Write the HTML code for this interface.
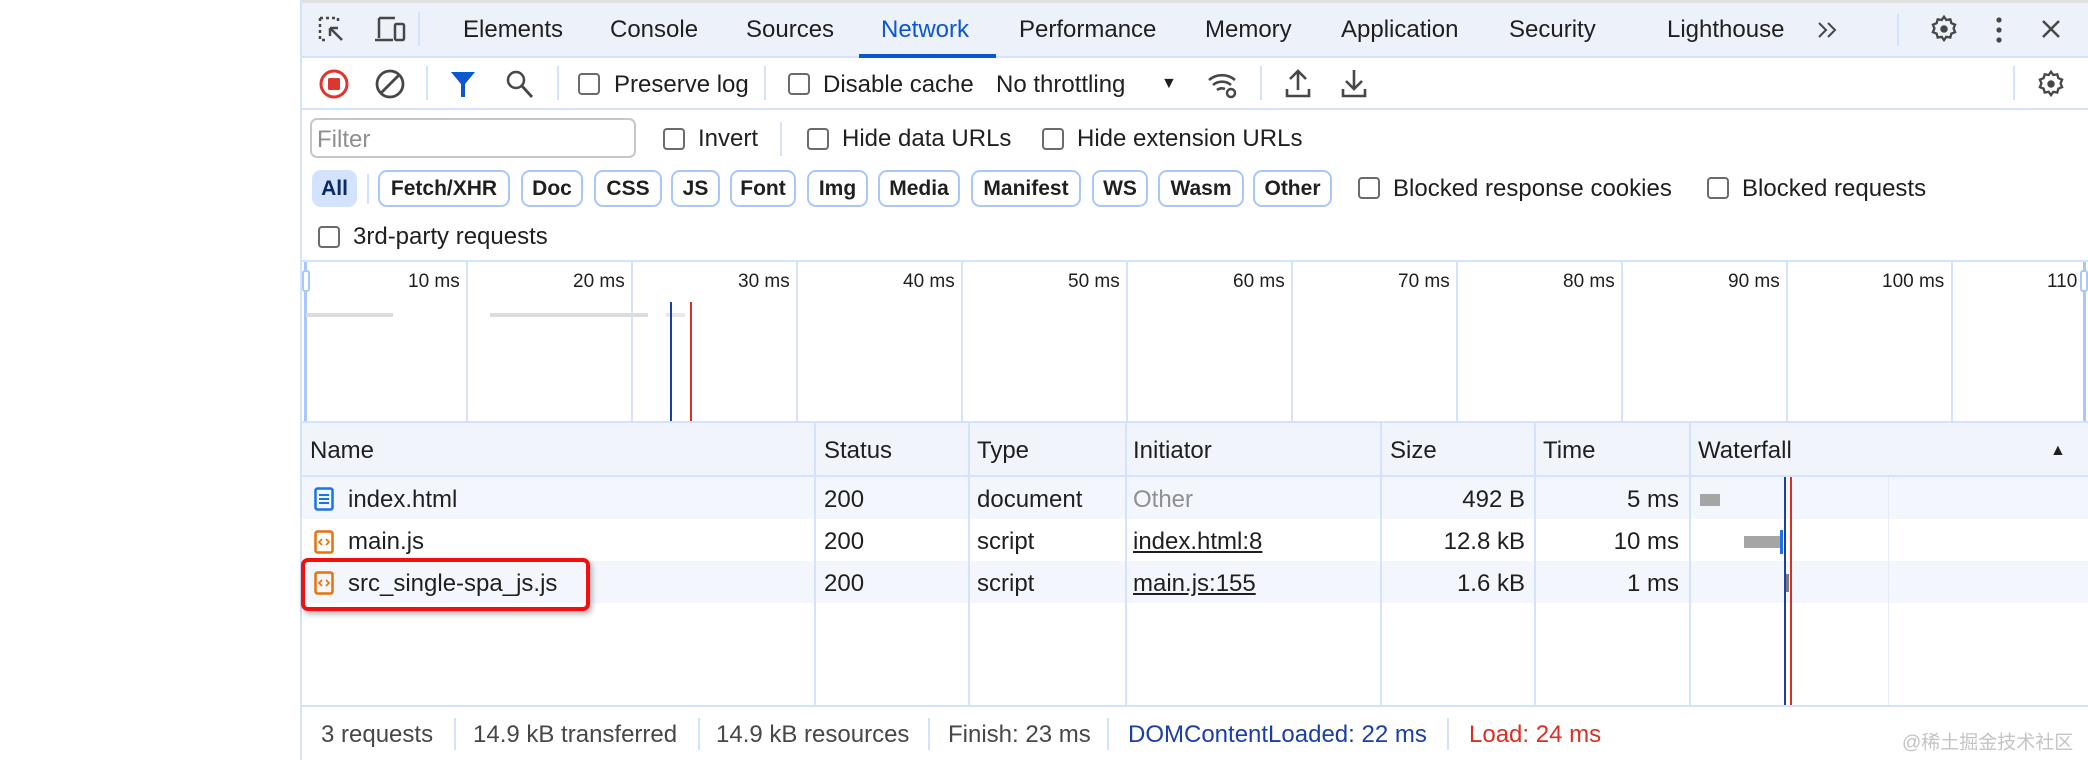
<!DOCTYPE html>
<html><head><meta charset="utf-8"><style>
*{margin:0;padding:0;box-sizing:border-box}
body{width:2088px;height:760px;background:#fff;position:relative;overflow:hidden;font-family:"Liberation Sans",sans-serif;font-size:24px;color:#1f1f1f}
.a{position:absolute;white-space:nowrap}
.t{transform:translateY(-50%)}
.cb{position:absolute;width:22px;height:22px;border:2px solid #6b6b6b;border-radius:4px;transform:translateY(-50%)}
.chip{position:absolute;top:170px;height:37px;border:2px solid #a8c7fa;border-radius:9px;font-weight:bold;font-size:21px;line-height:33px;text-align:center;color:#1f1f1f}
.sep{position:absolute;width:2px;background:#d3e3fd}
.vl{position:absolute;width:2px;background:#d3e3fd}
.tl{position:absolute;top:271px;font-size:19px;white-space:nowrap}
</style></head><body>
<div class="a" style="left:300px;top:0;width:1788px;height:760px;border-left:2px solid #d3e3fd"></div>
<!-- tab bar -->
<div class="a" style="left:302px;top:0;width:1786px;height:58px;background:#edf1f9;border-top:3px solid #e0e0e0;border-bottom:2px solid #d3e3fd"></div>
<svg class="a" style="left:318px;top:16px" width="30" height="28" viewBox="0 0 30 28"><path d="M2 2h18v6M2 2v22h6" fill="none" stroke="#474747" stroke-width="2.5" stroke-dasharray="3 3"/><path d="M12 12l12 12M12 12h8M12 12v8" fill="none" stroke="#474747" stroke-width="2.5"/></svg>
<svg class="a" style="left:373px;top:16px" width="34" height="28" viewBox="0 0 34 28"><path d="M6 2h16M6 2v20M2 24h18" fill="none" stroke="#474747" stroke-width="2.5"/><rect x="22" y="8" width="9" height="16" rx="1.5" fill="none" stroke="#474747" stroke-width="2.5"/></svg>
<div class="sep" style="left:418px;top:12px;height:34px"></div>
<div class="a t" style="left:463px;top:30px">Elements</div>
<div class="a t" style="left:610px;top:30px">Console</div>
<div class="a t" style="left:746px;top:30px">Sources</div>
<div class="a t" style="left:881px;top:30px;color:#0b57d0">Network</div>
<div class="a" style="left:859px;top:54px;width:137px;height:4px;background:#0b57d0"></div>
<div class="a t" style="left:1019px;top:30px">Performance</div>
<div class="a t" style="left:1205px;top:30px">Memory</div>
<div class="a t" style="left:1341px;top:30px">Application</div>
<div class="a t" style="left:1509px;top:30px">Security</div>
<div class="a t" style="left:1667px;top:30px">Lighthouse</div>
<svg class="a" style="left:1816px;top:21px" width="24" height="18"><path d="M3 2l7 7-7 7M12 2l7 7-7 7" fill="none" stroke="#474747" stroke-width="2"/></svg>
<div class="sep" style="left:1897px;top:14px;height:32px"></div>
<svg class="a" style="left:1930px;top:15px" width="28" height="28" viewBox="0 0 24 24"><path d="M12 1.5l2 2.8 3.4-.6.9 3.3 3.2 1.3-1.3 3.2 1.3 3.2-3.2 1.3-.9 3.3-3.4-.6-2 2.8-2-2.8-3.4.6-.9-3.3-3.2-1.3 1.3-3.2-1.3-3.2 3.2-1.3.9-3.3 3.4.6z" fill="none" stroke="#474747" stroke-width="2"/><circle cx="12" cy="12" r="3.2" fill="#474747"/></svg>
<svg class="a" style="left:1994px;top:17px" width="10" height="26"><circle cx="5" cy="3" r="2.6" fill="#474747"/><circle cx="5" cy="13" r="2.6" fill="#474747"/><circle cx="5" cy="23" r="2.6" fill="#474747"/></svg>
<svg class="a" style="left:2041px;top:19px" width="20" height="20"><path d="M2 2l16 16M18 2L2 18" stroke="#474747" stroke-width="2.5"/></svg>
<!-- toolbar -->
<div class="a" style="left:302px;top:108px;width:1786px;height:2px;background:#d3e3fd"></div>
<svg class="a" style="left:318px;top:68px" width="32" height="32"><circle cx="16" cy="16" r="13" fill="none" stroke="#dc362e" stroke-width="3"/><rect x="10" y="10" width="12" height="12" rx="1.5" fill="#dc362e"/></svg>
<svg class="a" style="left:374px;top:68px" width="32" height="32"><circle cx="16" cy="16" r="13" fill="none" stroke="#474747" stroke-width="2.8"/><path d="M7 25L25 7" stroke="#474747" stroke-width="2.8"/></svg>
<div class="sep" style="left:426px;top:66px;height:34px"></div>
<svg class="a" style="left:450px;top:70px" width="26" height="28"><path d="M1 2h24L15 14v13h-4V14z" fill="#0b57d0"/></svg>
<svg class="a" style="left:505px;top:69px" width="30" height="30"><circle cx="11" cy="11" r="8" fill="none" stroke="#474747" stroke-width="2.5"/><path d="M17 17l10 11" stroke="#474747" stroke-width="2.8"/></svg>
<div class="sep" style="left:557px;top:66px;height:34px"></div>
<div class="cb" style="left:578px;top:84px"></div>
<div class="a t" style="left:614px;top:85px">Preserve log</div>
<div class="sep" style="left:764px;top:66px;height:34px"></div>
<div class="cb" style="left:788px;top:84px"></div>
<div class="a t" style="left:823px;top:85px">Disable cache</div>
<div class="a t" style="left:996px;top:85px">No throttling</div>
<div class="a t" style="left:1161px;top:84px;font-size:16px">▼</div>
<svg class="a" style="left:1206px;top:70px" width="34" height="30" viewBox="0 0 34 30"><path d="M3 10a20 20 0 0 1 26 0M7 15a14 14 0 0 1 18 0M11 20a8 8 0 0 1 8-1" fill="none" stroke="#474747" stroke-width="2.6"/><circle cx="25" cy="23" r="4" fill="none" stroke="#474747" stroke-width="2.5"/></svg>
<div class="sep" style="left:1260px;top:66px;height:34px"></div>
<svg class="a" style="left:1285px;top:68px" width="26" height="30"><path d="M13 22V4M5 11l8-8 8 8M2 21v7h22v-7" fill="none" stroke="#474747" stroke-width="2.6"/></svg>
<svg class="a" style="left:1341px;top:68px" width="26" height="30"><path d="M13 2v19M5 13l8 8 8-8M2 21v7h22v-7" fill="none" stroke="#474747" stroke-width="2.6"/></svg>
<div class="sep" style="left:2013px;top:66px;height:34px"></div>
<svg class="a" style="left:2037px;top:70px" width="28" height="28" viewBox="0 0 24 24"><path d="M12 1.5l2 2.8 3.4-.6.9 3.3 3.2 1.3-1.3 3.2 1.3 3.2-3.2 1.3-.9 3.3-3.4-.6-2 2.8-2-2.8-3.4.6-.9-3.3-3.2-1.3 1.3-3.2-1.3-3.2 3.2-1.3.9-3.3 3.4.6z" fill="none" stroke="#474747" stroke-width="2"/><circle cx="12" cy="12" r="3.2" fill="#474747"/></svg>
<!-- filter row -->
<div class="a" style="left:310px;top:118px;width:326px;height:40px;border:2px solid #c7c7c7;border-radius:7px"></div>
<div class="a t" style="left:317px;top:140px;color:#8f8f8f">Filter</div>
<div class="cb" style="left:663px;top:139px"></div>
<div class="a t" style="left:698px;top:139px">Invert</div>
<div class="sep" style="left:780px;top:122px;height:34px"></div>
<div class="cb" style="left:807px;top:139px"></div>
<div class="a t" style="left:842px;top:139px">Hide data URLs</div>
<div class="cb" style="left:1042px;top:139px"></div>
<div class="a t" style="left:1077px;top:139px">Hide extension URLs</div>
<!-- chips -->
<div class="chip" style="left:312px;width:45px;background:#d3e3fd;border-color:#d3e3fd;color:#0a2a66">All</div>
<div class="sep" style="left:367px;top:174px;height:30px"></div>
<div class="chip" style="left:378px;width:132px">Fetch/XHR</div>
<div class="chip" style="left:521px;width:62px">Doc</div>
<div class="chip" style="left:594px;width:68px">CSS</div>
<div class="chip" style="left:671px;width:49px">JS</div>
<div class="chip" style="left:730px;width:66px">Font</div>
<div class="chip" style="left:807px;width:61px">Img</div>
<div class="chip" style="left:878px;width:82px">Media</div>
<div class="chip" style="left:971px;width:110px">Manifest</div>
<div class="chip" style="left:1092px;width:56px">WS</div>
<div class="chip" style="left:1158px;width:86px">Wasm</div>
<div class="chip" style="left:1253px;width:79px">Other</div>
<div class="cb" style="left:1358px;top:188px"></div>
<div class="a t" style="left:1393px;top:189px">Blocked response cookies</div>
<div class="cb" style="left:1707px;top:188px"></div>
<div class="a t" style="left:1742px;top:189px">Blocked requests</div>
<div class="cb" style="left:318px;top:237px"></div>
<div class="a t" style="left:353px;top:237px">3rd-party requests</div>
<!-- overview -->
<div class="a" style="left:302px;top:260px;width:1786px;height:2px;background:#d3e3fd"></div>
<div class="a" style="left:302px;top:421px;width:1786px;height:2px;background:#d3e3fd"></div>
<div class="a" style="left:304px;top:262px;width:3px;height:159px;background:#a8c7fa"></div>
<div class="a" style="left:2083px;top:262px;width:3px;height:159px;background:#a8c7fa"></div>
<div class="a" style="left:302px;top:270px;width:8px;height:22px;border:2px solid #a8c7fa;border-radius:3px;background:#fff"></div>
<div class="a" style="left:2080px;top:270px;width:8px;height:22px;border:2px solid #a8c7fa;border-radius:3px;background:#fff"></div>
<div class="vl" style="left:466px;top:262px;height:159px"></div>
<div class="vl" style="left:631px;top:262px;height:159px"></div>
<div class="vl" style="left:796px;top:262px;height:159px"></div>
<div class="vl" style="left:961px;top:262px;height:159px"></div>
<div class="vl" style="left:1126px;top:262px;height:159px"></div>
<div class="vl" style="left:1291px;top:262px;height:159px"></div>
<div class="vl" style="left:1456px;top:262px;height:159px"></div>
<div class="vl" style="left:1621px;top:262px;height:159px"></div>
<div class="vl" style="left:1786px;top:262px;height:159px"></div>
<div class="vl" style="left:1951px;top:262px;height:159px"></div>
<div class="tl" style="left:408px">10 ms</div>
<div class="tl" style="left:573px">20 ms</div>
<div class="tl" style="left:738px">30 ms</div>
<div class="tl" style="left:903px">40 ms</div>
<div class="tl" style="left:1068px">50 ms</div>
<div class="tl" style="left:1233px">60 ms</div>
<div class="tl" style="left:1398px">70 ms</div>
<div class="tl" style="left:1563px">80 ms</div>
<div class="tl" style="left:1728px">90 ms</div>
<div class="tl" style="left:1882px">100 ms</div>
<div class="tl" style="left:2047px">110</div>
<div class="a" style="left:306px;top:313px;width:87px;height:4px;background:#dcdcdc"></div>
<div class="a" style="left:490px;top:313px;width:158px;height:4px;background:#dcdcdc"></div>
<div class="a" style="left:666px;top:313px;width:19px;height:4px;background:#e8e8e8"></div>
<div class="a" style="left:670px;top:302px;width:2px;height:119px;background:#1a3fa6"></div>
<div class="a" style="left:690px;top:302px;width:2px;height:119px;background:#d93025"></div>
<!-- table -->
<div class="a" style="left:302px;top:423px;width:1786px;height:54px;background:#f1f4fa;border-bottom:2px solid #d3e3fd"></div>
<div class="a" style="left:302px;top:477px;width:1786px;height:42px;background:#f3f6fc"></div>
<div class="a" style="left:302px;top:561px;width:1786px;height:42px;background:#f3f6fc"></div>
<div class="vl" style="left:814px;top:423px;height:283px"></div>
<div class="vl" style="left:968px;top:423px;height:283px"></div>
<div class="vl" style="left:1125px;top:423px;height:283px"></div>
<div class="vl" style="left:1380px;top:423px;height:283px"></div>
<div class="vl" style="left:1534px;top:423px;height:283px"></div>
<div class="vl" style="left:1689px;top:423px;height:283px"></div>
<div class="a" style="left:1888px;top:477px;width:1px;height:229px;background:#e6ecf7"></div>
<div class="a t" style="left:310px;top:451px">Name</div>
<div class="a t" style="left:824px;top:451px">Status</div>
<div class="a t" style="left:977px;top:451px">Type</div>
<div class="a t" style="left:1133px;top:451px">Initiator</div>
<div class="a t" style="left:1390px;top:451px">Size</div>
<div class="a t" style="left:1543px;top:451px">Time</div>
<div class="a t" style="left:1698px;top:451px">Waterfall</div>
<div class="a t" style="left:2050px;top:451px;font-size:16px">▲</div>
<svg class="a" style="left:314px;top:487px" width="20" height="24"><rect x="1.5" y="1.5" width="17" height="21" rx="2" fill="none" stroke="#1a73e8" stroke-width="2.5"/><path d="M5 8h10M5 12h10M5 16h10" stroke="#1a73e8" stroke-width="2"/></svg>
<svg class="a" style="left:314px;top:530px" width="20" height="24"><rect x="1.5" y="1.5" width="17" height="21" rx="2" fill="none" stroke="#e8710a" stroke-width="2.5"/><path d="M8 9l-3 3 3 3M12 9l3 3-3 3" fill="none" stroke="#e8710a" stroke-width="1.6"/></svg>
<svg class="a" style="left:314px;top:571px" width="20" height="24"><rect x="1.5" y="1.5" width="17" height="21" rx="2" fill="none" stroke="#e8710a" stroke-width="2.5"/><path d="M8 9l-3 3 3 3M12 9l3 3-3 3" fill="none" stroke="#e8710a" stroke-width="1.6"/></svg>
<div class="a t" style="left:348px;top:500px">index.html</div>
<div class="a t" style="left:348px;top:542px">main.js</div>
<div class="a t" style="left:348px;top:584px">src_single-spa_js.js</div>
<div class="a t" style="left:824px;top:500px">200</div>
<div class="a t" style="left:824px;top:542px">200</div>
<div class="a t" style="left:824px;top:584px">200</div>
<div class="a t" style="left:977px;top:500px">document</div>
<div class="a t" style="left:977px;top:542px">script</div>
<div class="a t" style="left:977px;top:584px">script</div>
<div class="a t" style="left:1133px;top:500px;color:#8f8f8f">Other</div>
<div class="a t" style="left:1133px;top:542px;text-decoration:underline">index.html:8</div>
<div class="a t" style="left:1133px;top:584px;text-decoration:underline">main.js:155</div>
<div class="a t" style="right:563px;top:500px">492 B</div>
<div class="a t" style="right:563px;top:542px">12.8 kB</div>
<div class="a t" style="right:563px;top:584px">1.6 kB</div>
<div class="a t" style="right:409px;top:500px">5 ms</div>
<div class="a t" style="right:409px;top:542px">10 ms</div>
<div class="a t" style="right:409px;top:584px">1 ms</div>
<div class="a" style="left:1700px;top:494px;width:20px;height:12px;background:#a5a5a5"></div>
<div class="a" style="left:1744px;top:536px;width:36px;height:12px;background:#a5a5a5"></div>
<div class="a" style="left:1780px;top:530px;width:3px;height:24px;background:#1a73e8"></div>
<div class="a" style="left:1786px;top:574px;width:3px;height:18px;background:#7a7a7a"></div>
<div class="a" style="left:1784px;top:477px;width:2px;height:229px;background:#1a3fa6"></div>
<div class="a" style="left:1790px;top:477px;width:2px;height:229px;background:#d93025"></div>
<div class="a" style="left:301px;top:558px;width:289px;height:53px;border:4px solid #f01010;border-radius:7px;box-shadow:2px 3px 6px rgba(0,0,0,.3)"></div>
<!-- footer -->
<div class="a" style="left:302px;top:705px;width:1786px;height:2px;background:#d3e3fd"></div>
<div class="a t" style="left:321px;top:735px;color:#474747">3 requests</div>
<div class="sep" style="left:454px;top:718px;height:32px"></div>
<div class="a t" style="left:473px;top:735px;color:#474747">14.9 kB transferred</div>
<div class="sep" style="left:698px;top:718px;height:32px"></div>
<div class="a t" style="left:716px;top:735px;color:#474747">14.9 kB resources</div>
<div class="sep" style="left:928px;top:718px;height:32px"></div>
<div class="a t" style="left:948px;top:735px;color:#474747">Finish: 23 ms</div>
<div class="sep" style="left:1107px;top:718px;height:32px"></div>
<div class="a t" style="left:1128px;top:735px;color:#1a3fa6">DOMContentLoaded: 22 ms</div>
<div class="sep" style="left:1447px;top:718px;height:32px"></div>
<div class="a t" style="left:1469px;top:735px;color:#d93025">Load: 24 ms</div>
<div class="a t" style="left:1902px;top:741px;color:#c4c4c4;font-size:19px;font-family:'Liberation Sans','Noto Sans CJK SC',sans-serif">@稀土掘金技术社区</div>
</body></html>
